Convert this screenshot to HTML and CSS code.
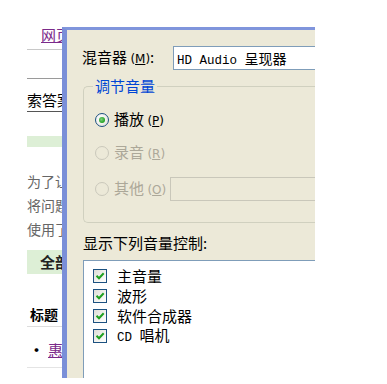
FILE: index.html
```html
<!DOCTYPE html>
<html>
<head>
<meta charset="utf-8">
<link rel="stylesheet" href="styles.css">
</head>
<body>
<div class="screen">
  <div class="page">
    <div class="p-link"><span class="lnk">网页</span></div>
    <div class="p-rule p-rule1"></div>
    <div class="p-search"><span>索答案</span></div>
    <div class="p-green"></div>
    <div class="p-text">为了让</div>
    <div class="p-text">将问题</div>
    <div class="p-text">使用了</div>
    <div class="p-tab"><span>全部</span></div>
    <div class="p-title">标题</div>
    <div class="p-item"><span class="dot">·</span><span class="lnk">惠普</span></div>
    <div class="p-rule p-rule3"></div>
  </div>
  <div class="dialog">
    <div class="mixer">
      <span class="mixer-label">混音器 <span class="acc">(<u>M</u>)</span>:</span>
      <div class="combo"><span class="mono">HD Audio </span>呈现器</div>
    </div>
    <div class="group">
      <span class="legend">调节音量</span>
      <div class="radio-row r1">
        <span class="radio on"></span><span>播放 <span class="acc">(<u>P</u>)</span></span>
      </div>
      <div class="radio-row r2 disabled">
        <span class="radio"></span><span>录音 <span class="acc">(<u>R</u>)</span></span>
      </div>
      <div class="radio-row r3 disabled">
        <span class="radio"></span><span class="other-label">其他 <span class="acc">(<u>O</u>)</span></span>
        <div class="textbox"></div>
      </div>
    </div>
    <div class="show-label">显示下列音量控制:</div>
    <div class="listbox">
      <div class="check-row"><span class="check"><svg viewBox="0 0 14 14" width="14" height="14"><path d="M3.5 6.8 L6 9.3 L10.7 4.3" fill="none" stroke="#21a121" stroke-width="2"/></svg></span><span>主音量</span></div>
      <div class="check-row"><span class="check"><svg viewBox="0 0 14 14" width="14" height="14"><path d="M3.5 6.8 L6 9.3 L10.7 4.3" fill="none" stroke="#21a121" stroke-width="2"/></svg></span><span>波形</span></div>
      <div class="check-row"><span class="check"><svg viewBox="0 0 14 14" width="14" height="14"><path d="M3.5 6.8 L6 9.3 L10.7 4.3" fill="none" stroke="#21a121" stroke-width="2"/></svg></span><span>软件合成器</span></div>
      <div class="check-row"><span class="check"><svg viewBox="0 0 14 14" width="14" height="14"><path d="M3.5 6.8 L6 9.3 L10.7 4.3" fill="none" stroke="#21a121" stroke-width="2"/></svg></span><span><span class="mono">CD </span>唱机</span></div>
    </div>
  </div>
</div>
</body>
</html>
```

FILE: styles.css
```css
html, body {
  margin: 0;
  padding: 0;
  background: #fff;
}
body {
  font-family: "Noto Sans CJK SC", "Noto Sans", sans-serif;
  color: #000;
}
.screen {
  display: flex;
  align-items: flex-start;
  padding: 27px 0 0 27px;
  height: 384px;
  box-sizing: border-box;
  overflow: hidden;
}
.page {
  width: 35px;
  flex: none;
  overflow: hidden;
  white-space: nowrap;
  font-size: 14px;
}
.lnk {
  color: #7b2a8a;
  text-decoration: underline;
}
.p-link {
  height: 16px;
  line-height: 16px;
  padding-left: 14px;
  font-size: 15px;
}
.p-rule {
  height: 1px;
  background: #c8c8c8;
}
.p-rule1 {
  margin-top: 6px;
}
.p-search {
  margin-top: 28px;
  height: 34px;
  border-top: 1px solid #9a9a9a;
  border-bottom: 1px solid #555;
  box-sizing: border-box;
  line-height: 20px;
  padding-top: 11px;
  font-size: 15px;
}
.p-green {
  margin-top: 24px;
  height: 11px;
  background: #ddefd6;
}
.p-text {
  color: #666;
  font-size: 14px;
  line-height: 24px;
  height: 24px;
}
.p-green + .p-text {
  margin-top: 22px;
}
.p-tab {
  margin-top: 9px;
  height: 24px;
  background: #ddefd6;
  line-height: 24px;
  padding-left: 13px;
  font-size: 15px;
  font-weight: bold;
  color: #222;
}
.p-title {
  margin-top: 32px;
  padding-left: 3px;
  font-weight: bold;
  font-size: 14px;
  line-height: 16px;
  height: 20px;
  border-bottom: 1px solid #ddd;
}
.p-item {
  margin-top: 14px;
  line-height: 18px;
  font-size: 15px;
  padding-left: 2px;
}
.p-item .dot {
  font-weight: bold;
  margin-right: 4px;
}
.p-rule3 {
  margin-top: 8px;
  background: #e4e4e4;
}

.dialog {
  width: 253px;
  flex: none;
  height: 351px;
  background: #ece9d8;
  border-left: 5px solid #7a8fd8;
  border-top: 3px solid #8095dc;
  overflow: hidden;
  padding: 16px 0 0 15px;
  box-sizing: border-box;
  font-size: 15px;
  white-space: nowrap;
}
.acc {
  font-family: "DejaVu Sans", sans-serif;
  font-size: 12px;
}
.mono {
  font-family: "Liberation Mono", monospace;
  font-size: 12.5px;
}
.mixer {
  display: flex;
  align-items: center;
  height: 24px;
}
.mixer-label {
  width: 91px;
  flex: none;
  line-height: 20px;
}
.combo {
  flex: none;
  width: 170px;
  height: 24px;
  box-sizing: border-box;
  border: 1px solid #7f9db9;
  border-right: none;
  background: #fff;
  line-height: 22px;
  padding-left: 3px;
  font-size: 14px;
}
.group {
  position: relative;
  margin-top: 16px;
  margin-left: 1px;
  height: 137px;
  box-sizing: border-box;
  border: 1px solid #d0d0bf;
  border-right: none;
  border-radius: 5px 0 0 5px;
  padding: 23px 0 0 11px;
}
.legend {
  position: absolute;
  top: -11px;
  left: 9px;
  padding: 0 2px;
  background: #ece9d8;
  color: #0046d5;
  line-height: 20px;
}
.radio-row {
  display: flex;
  align-items: center;
  height: 20px;
  line-height: 20px;
}
.r2 {
  margin-top: 13px;
}
.r3 {
  margin-top: 14px;
  height: 24px;
}
.radio {
  width: 14px;
  height: 14px;
  box-sizing: border-box;
  border-radius: 50%;
  border: 1px solid #1c5180;
  background: radial-gradient(circle at 40% 40%, #fff 0, #f1f1ef 50%, #d8d6cc 100%);
  margin-right: 5px;
  flex: none;
  position: relative;
}
.radio.on::after {
  content: "";
  position: absolute;
  left: 3px;
  top: 3px;
  width: 6px;
  height: 6px;
  border-radius: 50%;
  background: radial-gradient(circle at 40% 40%, #7ed07e 0, #21a121 70%);
}
.disabled {
  color: #aca899;
}
.disabled .radio {
  border-color: #cac8bb;
  background: #ece9d8;
}
.other-label {
  width: 56px;
  flex: none;
}
.textbox {
  width: 170px;
  height: 24px;
  box-sizing: border-box;
  border: 1px solid #c9c7ba;
  border-right: none;
  background: #ece9d8;
  flex: none;
}
.show-label {
  margin-top: 10px;
  line-height: 20px;
  margin-left: 1px;
}
.listbox {
  margin-top: 7px;
  margin-left: 1px;
  height: 130px;
  background: #fff;
  border: 1px solid #7f9db9;
  border-right: none;
  padding: 5px 0 0 9px;
}
.check-row {
  display: flex;
  align-items: center;
  height: 20px;
  line-height: 20px;
}
.check {
  width: 14px;
  height: 14px;
  box-sizing: border-box;
  border: 1px solid #1c5180;
  background: linear-gradient(135deg, #dcdcd6 0, #f4f4f0 60%, #fff 100%);
  margin-right: 10px;
  flex: none;
  display: flex;
}
.check svg {
  margin: -1px;
}
```
